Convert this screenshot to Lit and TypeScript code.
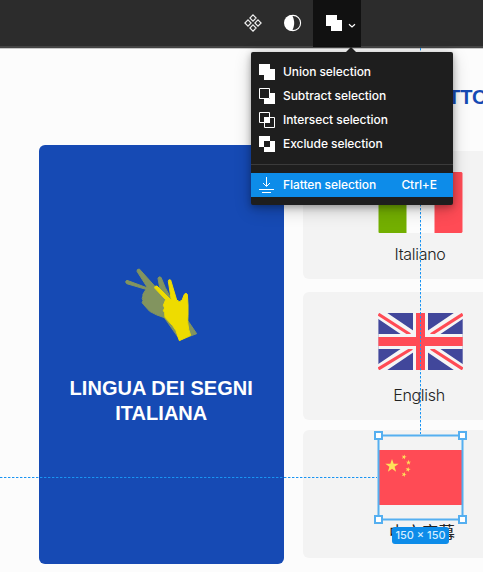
import { LitElement, html, css, svg } from "lit";
import { customElement } from "lit/decorators.js";

const icons = {
  union: svg`<path fill="#fff" d="M0 0h11v5h5v11H5v-5H0z"/>`,
  subtract: svg`<path fill="#fff" d="M11 5h5v11H5v-5h6z"/><path fill="none" stroke="#fff" d="M.5.5h10v10H.5z"/>`,
  intersect: svg`<path fill="#fff" d="M5 5h6v6H5z"/><path fill="none" stroke="#fff" d="M.5.5h10v10H.5zM5.500 5.500h10v10h-10z"/>`,
  exclude: svg`<path fill="#fff" fill-rule="evenodd" d="M0 0h11v5h5v11H5v-5H0zM5 5h6v6H5z"/>`,
  flatten: svg`<path fill="none" stroke="#fff" d="M7.500 0v9M4 6l3.500 3.500L11 6M0 12.500h15M3 15.500h9"/>`,
};

const star = "M0-7 1.650-2.200 6.700-2.200 2.600.800 4.100 5.700 0 2.700-4.100 5.700-2.600.800-6.700-2.200-1.650-2.200z";

@customElement("app-root")
export class AppRoot extends LitElement {
  static styles = css`
    :host {
      display: block;
      position: relative;
      width: 483px;
      height: 572px;
      overflow: hidden;
      background: #fcfcfc;
      font-family: Inter, "Liberation Sans", sans-serif;
    }
    svg { display: block; flex: none; }
    .bar {
      height: 46px;
      display: flex;
      align-items: stretch;
      padding-left: 244px;
      background: #2c2c2c;
      border-bottom: 2px solid #444;
      box-shadow: 0 1px #c6c6c6;
    }
    .tools { display: flex; align-items: center; gap: 22px; width: 69px; }
    .active {
      width: 48px;
      height: 47px;
      display: flex;
      padding: 15px 0 0 13px;
      box-sizing: border-box;
      background: #111;
    }
    .active .chev { margin: 8px 0 0 6px; }
    .canvas { display: flex; height: 524px; }
    .sign {
      flex: none;
      width: 245.500px;
      height: 419px;
      margin: 97px 0 0 38.500px;
      border-radius: 6px;
      background: #164ab4;
      box-sizing: border-box;
      padding-top: 110px;
    }
    .hand { margin-left: 71.500px; }
    .sign h1 {
      margin: 21px 0 0;
      text-align: center;
      color: #fff;
      font: bold 20px/25px "Liberation Sans", Arial, sans-serif;
      letter-spacing: 0.05px;
      white-space: nowrap;
    }
    .right { width: 260px; flex: none; margin-left: 19px; }
    .heading {
      height: 103px;
      padding: 36px 0 0 145px;
      box-sizing: border-box;
      color: #164ab4;
      font: bold 20px/26px "Liberation Sans", Arial, sans-serif;
    }
    .card {
      height: 128px;
      border-radius: 6px;
      background: #f3f3f3;
      box-sizing: border-box;
      padding: 21px 0 0 75px;
      margin-bottom: 13px;
    }
    .card.mid { margin-bottom: 10px; }
    .card.low { padding-top: 20px; }
    .label {
      width: 84px;
      margin-top: 9px;
      text-align: center;
      font-size: 16px;
      line-height: 24px;
      font-weight: 300;
      letter-spacing: -0.3px;
      color: #222;
      white-space: nowrap;
    }
    .label.en { margin: 13px 0 0 -1px; }
    .label.zh {
      margin: 14px 0 0 2px;
      font: 400 16.500px/26px "Noto Sans CJK SC", sans-serif;
      letter-spacing: 0;
    }
    .guides { position: absolute; inset: 0; }
    .size {
      position: absolute;
      left: 392px;
      top: 527px;
      width: 57px;
      height: 17px;
      border-radius: 3px;
      background: #0d8ce9;
      color: #d4ecff;
      font-size: 11px;
      line-height: 17px;
      font-weight: 500;
      text-align: center;
      white-space: nowrap;
    }
    .menu {
      position: absolute;
      left: 251px;
      top: 52px;
      width: 202px;
      height: 153px;
      box-sizing: border-box;
      padding-top: 8px;
      border-radius: 2px;
      background: #1e1e1e;
      box-shadow: 0 5px 17px rgba(0, 0, 0, 0.2), 0 2px 7px rgba(0, 0, 0, 0.3);
      color: #fff;
    }
    .menu::before {
      content: "";
      position: absolute;
      left: 95px;
      top: -5px;
      border: 5px solid transparent;
      border-top: 0;
      border-bottom-color: #1e1e1e;
    }
    .item {
      height: 24px;
      display: flex;
      align-items: center;
      padding-left: 8px;
      font-size: 12px;
      font-weight: 500;
      letter-spacing: -0.06px;
      white-space: nowrap;
    }
    .item span { margin-left: 8px; padding-bottom: 2px; }
    .item .key { margin-left: auto; padding-right: 16px; }
    .rule { height: 1px; margin: 8px 0; background: #3b3b3b; }
    .hot { background: #0d8ce9; }
  `;

  private icon(name: keyof typeof icons) {
    return html`<svg width="16" height="16">${icons[name]}</svg>`;
  }

  render() {
    const items: [keyof typeof icons, string][] = [
      ["union", "Union selection"],
      ["subtract", "Subtract selection"],
      ["intersect", "Intersect selection"],
      ["exclude", "Exclude selection"],
    ];
    const small: [number, number, number][] = [[26, 7, 15], [30.500, 12.500, 0], [30, 19.500, 10], [26, 24.500, 20]];
    return html`
      <div class="bar">
        <div class="tools">
          <svg width="18" height="18" fill="none" stroke="#eee" stroke-width="1.200">
            <path d="M9 .9l3.100 3.100L9 7.100 5.900 4zM9 10.900l3.100 3.100L9 17.100 5.900 14zM4 5.900 7.100 9 4 12.100.9 9zM14 5.900 17.100 9 14 12.100 10.900 9z"/>
          </svg>
          <svg width="18" height="18">
            <circle cx="9" cy="9" r="7.600" fill="none" stroke="#fff" stroke-width="1.100"/>
            <path fill="#fff" d="M8 1A8 8 0 0 0 8 17C10.900 12 10.900 6 8 1z"/>
          </svg>
        </div>
        <div class="active">
          ${this.icon("union")}
          <svg class="chev" width="8" height="6"><path fill="none" stroke="#fff" stroke-width="1.200" d="M1 1.200 4 4l3-2.800"/></svg>
        </div>
      </div>
      <div class="canvas">
        <div class="sign">
          <svg class="hand" width="100" height="100" viewBox="0 0 300 300" stroke-width="3" stroke-linejoin="round">
            <path fill="#82945f" stroke="#82945f" d="M108 103 50 86Q43 79 51 76L113 99 81 49Q80 42 88 42L134 93 152 115 144 70Q146 63 153 67L166 98 184 132 237 202 260 236 210 255 163 188Q139 181 119 169L101 149Q93 142 99 137 94 130 99 123 97 119 101 114Z"/>
            <path fill="#eedc00" stroke="#eedc00" d="M167 134 134 99Q133 92 141 93L184 136 175 79Q175 72 182 75L200 135Q208 144 216 136L223 118Q228 112 232 118L234 150 234 181 233 202Q235 226 242 241L208 257 198 227 188 212 165 187 164 173 160 167 164 159 160 151Z"/>
          </svg>
          <h1>LINGUA DEI SEGNI<br />ITALIANA</h1>
        </div>
        <div class="right">
          <div class="heading">TTO</div>
          <div class="card">
            <svg width="85" height="61">
              <rect x=".5" width="84" height="61" rx="1" fill="#fcfcfc"/>
              <path fill="#73af00" d="M1.500 0h27v61h-27a1 1 0 0 1-1-1V1z"/>
              <path fill="#ff4b55" d="M56.500 0h27l1 1v59l-1 1h-27z"/>
            </svg>
            <div class="label">Italiano</div>
          </div>
          <div class="card mid">
            <svg width="85" height="57" viewBox="0 0 85 57">
              <rect x=".4" width="84.300" height="57" rx="1" fill="#41479b"/>
              <path stroke="#f5f5f5" stroke-width="10" d="M.4 0 84.700 57M84.700 0 .4 57"/>
              <path stroke="#ff4b55" stroke-width="3.200" d="M.4 1.200 32 21.500M84.700 1.200 53 21.500M.4 56 34 35.500M84.700 56 53 35.500"/>
              <path fill="#f5f5f5" d="M35 0h15v21h34.700v15H50v21H35V36H.4V21H35z"/>
              <path fill="#ff4b55" d="M38 0h9v24h37.700v9H47v24h-9V33H.4v-9H38z"/>
            </svg>
            <div class="label en">English</div>
          </div>
          <div class="card low">
            <svg width="85" height="55">
              <rect x=".5" width="84" height="55" rx="1" fill="#ff4b55"/>
              <path fill="#ffe15a" transform="translate(14 16)" d=${star}/>
              ${small.map(([x, y, r]) => svg`<path fill="#ffe15a" transform=${`translate(${x} ${y}) rotate(${r}) scale(.38)`} d=${star}/>`)}
            </svg>
            <div class="label zh">中文字幕</div>
          </div>
        </div>
      </div>
      <svg class="guides" width="483" height="572">
        <path fill="none" stroke="#1994f2" stroke-dasharray="2.400 1.600" d="M0 477.500h377M420.500 48v386"/>
        <rect x="378.500" y="435.500" width="84" height="84" fill="none" stroke="#55aff0" stroke-width="2"/>
        ${[[375, 432], [459, 432], [375, 516], [459, 516]].map(
          ([x, y]) => svg`<rect x=${x} y=${y} width="7" height="7" fill="#fff" stroke="#55aff0" stroke-width="2"/>`
        )}
      </svg>
      <div class="size">150 × 150</div>
      <div class="menu">
        ${items.map(([i, t]) => html`<div class="item">${this.icon(i)}<span>${t}</span></div>`)}
        <div class="rule"></div>
        <div class="item hot">${this.icon("flatten")}<span>Flatten selection</span><span class="key">Ctrl+E</span></div>
      </div>
    `;
  }
}
